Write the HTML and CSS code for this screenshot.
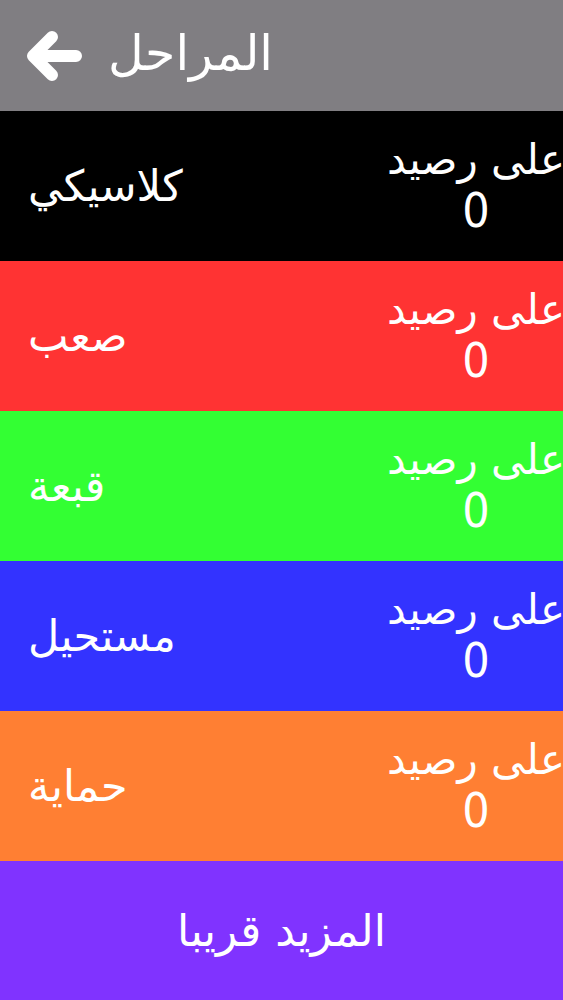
FILE: index.html
```html
<!DOCTYPE html>
<html lang="ar">
<head>
    <meta charset="UTF-8">
    <meta name="viewport" content="width=device-width, initial-scale=1.0">
    <title>المراحل</title>
    <link rel="stylesheet" href="styles.css">
</head>
<body>
    <div class="screen">
        <!-- الشريط العلوي -->
        <div class="topbar">
            <svg class="back" viewBox="0 0 60 56" width="60" height="56">
                <path d="M52 28 H10 M28 9 L9 28 L28 47" fill="none" stroke="#fff" stroke-width="12" stroke-linecap="round" stroke-linejoin="round"/>
            </svg>
            <h1 dir="rtl">المراحل</h1>
        </div>

        <div class="level black">
            <div class="name" dir="rtl">كلاسيكي</div>
            <div class="score">
                <div class="score-label" dir="rtl">على رصيد</div>
                <div class="score-value">0</div>
            </div>
        </div>

        <div class="level red">
            <div class="name" dir="rtl">صعب</div>
            <div class="score">
                <div class="score-label" dir="rtl">على رصيد</div>
                <div class="score-value">0</div>
            </div>
        </div>

        <div class="level green">
            <div class="name" dir="rtl">قبعة</div>
            <div class="score">
                <div class="score-label" dir="rtl">على رصيد</div>
                <div class="score-value">0</div>
            </div>
        </div>

        <div class="level blue">
            <div class="name" dir="rtl">مستحيل</div>
            <div class="score">
                <div class="score-label" dir="rtl">على رصيد</div>
                <div class="score-value">0</div>
            </div>
        </div>

        <div class="level orange">
            <div class="name" dir="rtl">حماية</div>
            <div class="score">
                <div class="score-label" dir="rtl">على رصيد</div>
                <div class="score-value">0</div>
            </div>
        </div>

        <div class="more" dir="rtl">المزيد قريبا</div>
    </div>
</body>
</html>
```

FILE: styles.css
```css
body {
    margin: 0;
    font-family: 'DejaVu Sans', 'Liberation Sans', sans-serif;
    color: white;
    overflow: hidden;
}
.screen {
    display: flex;
    flex-direction: column;
    height: 1000px;
    width: 563px;
    overflow: hidden;
}
.topbar {
    height: 111px;
    flex-shrink: 0;
    background-color: #807e82;
    display: flex;
    align-items: center;
    padding-left: 24px;
    gap: 24px;
}
.back {
    display: block;
}
h1 {
    margin: 0;
    font-size: 49px;
    font-weight: normal;
    padding-bottom: 4px;
}
.level {
    height: 150px;
    flex-shrink: 0;
    display: flex;
    align-items: center;
    justify-content: space-between;
    padding-left: 28px;
}
.name {
    font-size: 43px;
}
.score {
    width: 174px;
    display: flex;
    flex-direction: column;
    align-items: center;
}
.score-label {
    font-size: 42px;
    white-space: nowrap;
}
.score-value {
    font-size: 48px;
    font-family: 'DejaVu Sans Condensed', 'DejaVu Sans', sans-serif;
    line-height: 1.1;
}
.black { background-color: #000000; }
.red { background-color: #ff3333; }
.green { background-color: #33ff33; }
.blue { background-color: #3333ff; }
.orange { background-color: #ff7f33; }
.more {
    flex: 1;
    background-color: #8033ff;
    display: flex;
    align-items: center;
    justify-content: center;
    font-size: 44px;
}
```
